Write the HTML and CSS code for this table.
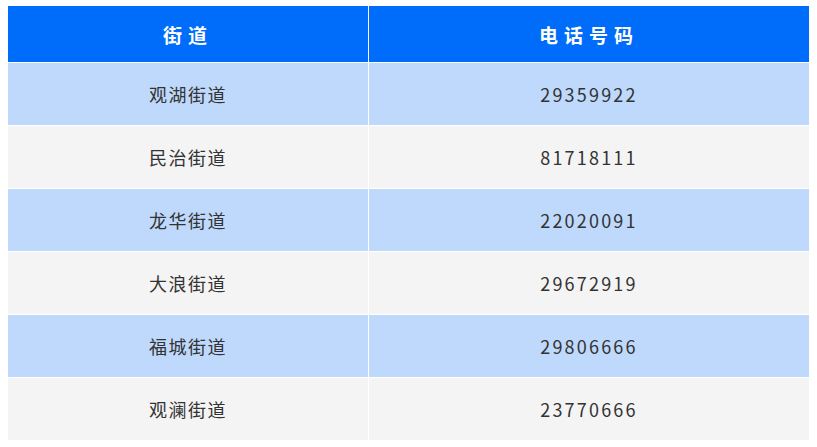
FILE: index.html
```html
<!DOCTYPE html>
<html lang="zh">
<head>
<meta charset="utf-8">
<link rel="stylesheet" href="styles.css">
</head>
<body>
<div class="table">
  <div class="row head"><div class="cell c1">街道</div><div class="cell c2">电话号码</div></div>
  <div class="row blue"><div class="cell c1">观湖街道</div><div class="cell c2">29359922</div></div>
  <div class="row grey"><div class="cell c1">民治街道</div><div class="cell c2">81718111</div></div>
  <div class="row blue"><div class="cell c1">龙华街道</div><div class="cell c2">22020091</div></div>
  <div class="row grey"><div class="cell c1">大浪街道</div><div class="cell c2">29672919</div></div>
  <div class="row blue"><div class="cell c1">福城街道</div><div class="cell c2">29806666</div></div>
  <div class="row grey"><div class="cell c1">观澜街道</div><div class="cell c2">23770666</div></div>
</div>
</body>
</html>
```
FILE: styles.css
```css
html, body { background: #fff; }
body { margin: 6px 8px 0 8px; font-family: "Noto Sans CJK SC", "Noto Sans", sans-serif; }
.table { display: flex; flex-direction: column; gap: 1px; background: #fff; }
.row { display: grid; grid-template-columns: 360px 1fr; gap: 1px; height: 62px; }
.row.head { height: 56px; }
.cell { display: flex; align-items: center; justify-content: center; font-size: 18px; color: #333; letter-spacing: 1.5px; }
.c2 { letter-spacing: 2.2px; }
.head .cell { background: #006cfa; color: #fff; font-weight: bold; font-size: 19px; letter-spacing: 6px; }
.blue .cell { background: #bfd9fd; }
.grey .cell { background: #f4f4f4; }
```
